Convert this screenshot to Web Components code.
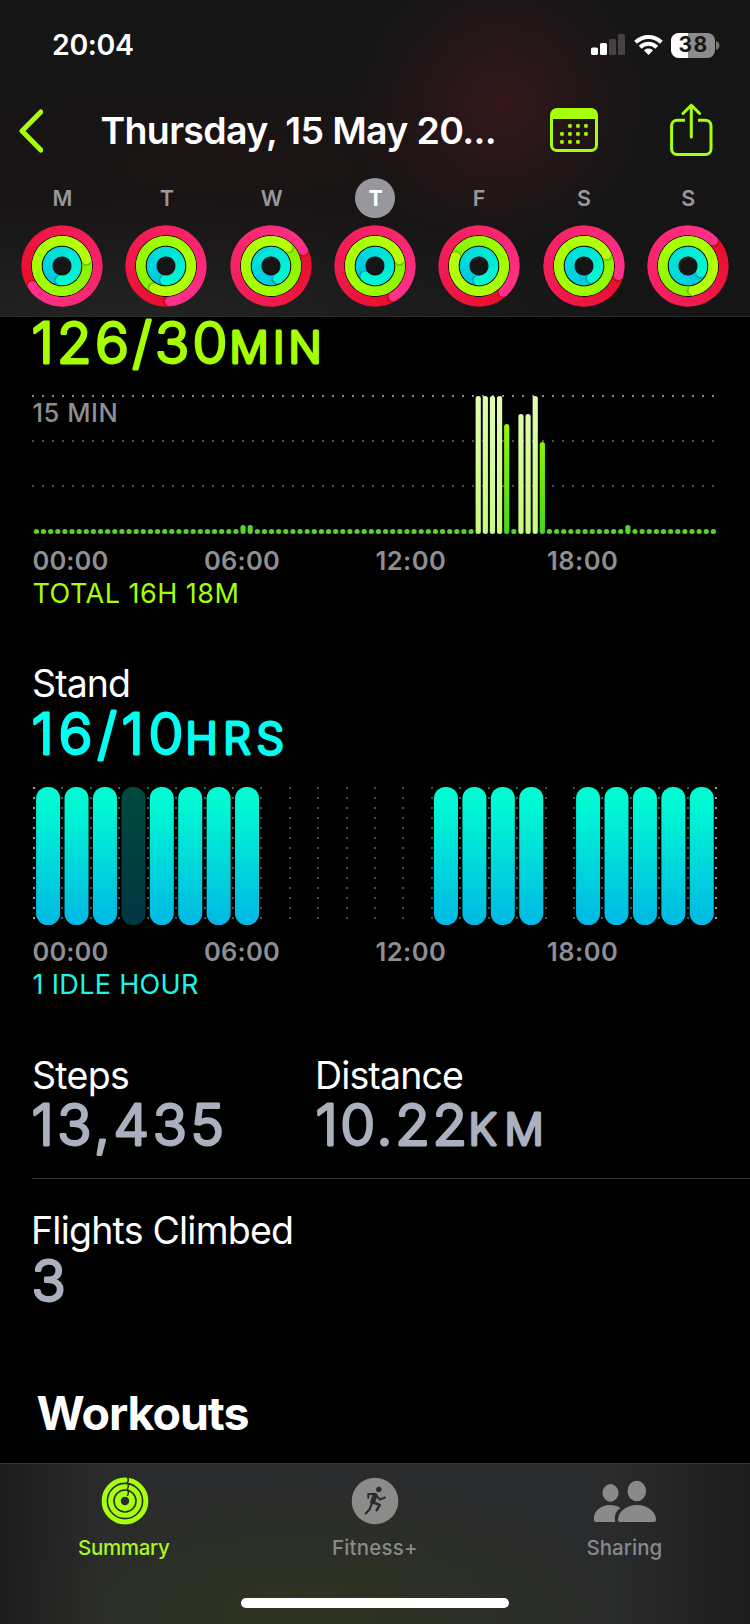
<!DOCTYPE html>
<html lang="en">
<head>
<meta charset="utf-8">
<title>Activity Summary</title>
<style>
  html, body { margin: 0; padding: 0; background: #000; }
  body { width: 750px; height: 1624px; overflow: hidden; font-family: Inter, "Liberation Sans", sans-serif; color: #fff; }
</style>
</head>
<body>
<activity-app></activity-app>
<script>
const FAMILY = 'Inter, "Liberation Sans", sans-serif';
const measurer = document.createElement('canvas').getContext('2d');

class Base extends HTMLElement {
  connectedCallback() {
    if (this.shadowRoot) return;
    this.attachShadow({ mode: 'open' }).innerHTML = this.render();
  }
  num(name, fallback) { return this.hasAttribute(name) ? +this.getAttribute(name) : fallback; }
}

/* A line of text tracked so that its ink fills the width `w`. `round` gives soft stroke ends. */
customElements.define('ink-text', class extends Base {
  render() {
    const text = this.getAttribute('text');
    const size = this.num('size', 24), weight = this.num('weight', 400), w = this.num('w', 100), h = this.num('h', 26);
    const round = this.num('round', 0);
    measurer.font = `${weight} ${size}px ${FAMILY}`;
    const m = measurer.measureText(text);
    const ink = m.actualBoundingBoxRight + m.actualBoundingBoxLeft + round;
    const gaps = text.length - 1;
    const ls = gaps ? (w - ink) / gaps : 0;
    const shift = m.actualBoundingBoxLeft + round / 2;
    const host = `:host{display:block;flex:none;width:${w}px;height:${h}px;font-family:${FAMILY};font-weight:${weight};font-size:${size}px}`;
    if (round) {
      return `<style>${host} svg{display:block;overflow:visible}
        text{fill:currentColor;stroke:currentColor;stroke-width:${round}px;stroke-linejoin:round;stroke-linecap:round;letter-spacing:${ls}px}</style>
        <svg width="${w}" height="${h}"><text x="${shift}" y="${h / 2 + 21.7 - round / 2}">${text}</text></svg>`;
    }
    return `<style>${host} span{display:block;white-space:pre;line-height:${h}px;letter-spacing:${ls}px;margin-left:${shift}px;width:max-content}</style><span>${text}</span>`;
  }
});

customElements.define('status-bar', class extends Base {
  render() {
    return `<style>
      :host{display:flex;height:90px;box-sizing:border-box;padding:0 31px 0 53px;align-items:center}
      ink-text{margin-right:458px}
      svg{display:block;flex:none}
      .sig{margin-right:9px}.wifi{margin-right:8px}
      .bat{display:flex;align-items:center;gap:1px}
      .cell{width:44px;height:25px;border-radius:7.5px;background:linear-gradient(90deg,#fff 38%,#8c8c8c 38%);display:flex;justify-content:center;align-items:center;color:#161616}
      .cell ink-text{margin:0}
      </style>
      <ink-text text="20:04" size="28.5" weight="600" w="80" h="30"></ink-text>
      <svg class="sig" width="34" height="22" viewBox="0 0 34 22"><g fill="#fff"><rect y="13.5" width="7" height="7.5" rx="1.6"/><rect x="9" y="9" width="7" height="12" rx="1.6"/></g><g fill="#454244"><rect x="18" y="5" width="7" height="16" rx="1.6"/><rect x="27" y="0" width="7" height="21" rx="1.6"/></g></svg>
      <svg class="wifi" width="29" height="22" viewBox="0 0 29 22" fill="none" stroke="#fff" stroke-width="4"><path d="M1.6 8.2C9 1.2 20 1.2 27.4 8.2"/><path d="M6.2 13.2C11 8.6 18 8.6 22.8 13.2"/><path d="M14.5 21L10 16.4C12.6 14 16.4 14 19 16.4Z" fill="#fff" stroke="none"/></svg>
      <div class="bat"><div class="cell"><ink-text text="38" size="21" weight="700" w="27" h="24"></ink-text></div>
      <svg width="4" height="9" viewBox="0 0 4 9"><path d="M0 0C4.600 1.500 4.600 7.500 0 9Z" fill="#767676"/></svg></div>`;
  }
});

customElements.define('nav-bar', class extends Base {
  render() {
    return `<style>
      :host{display:flex;height:80px;align-items:center;padding-left:17px;color:#fff}
      svg{display:block;flex:none}
      ink-text{margin:2px 0 0 58.500px}
      .back{margin-top:2px}
      .cal{margin:0 72px 0 55.500px}
      </style>
      <svg class="back" width="26" height="44" viewBox="0 0 26 44"><path d="M23.800 3L5 22L23.800 41" fill="none" stroke="#a8ff0c" stroke-width="5" stroke-linecap="round" stroke-linejoin="round"/></svg>
      <ink-text text="Thursday, 15 May 20..." size="37.500" weight="600" w="393" h="44"></ink-text>
      <svg class="cal" width="48" height="44" viewBox="0 0 48 44"><rect x="1.500" y="1.500" width="45" height="41" rx="5.500" fill="none" stroke="#a8ff0c" stroke-width="3"/><path d="M1.500 11V7a5.500 5.500 0 0 1 5.500-5.500h34a5.500 5.500 0 0 1 5.500 5.500v4z" fill="#a8ff0c"/><g fill="#a8ff0c">
        ${[[18,16],[26,16],[34,16],[10,24],[18,24],[26,24],[34,24],[10,32],[18,32],[26,32]].map(([x,y])=>`<rect x="${x+.2}" y="${y+.2}" width="3.500" height="3.500"/>`).join('')}</g></svg>
      <svg class="share" width="43" height="54" viewBox="0 0 43 54" fill="none" stroke="#a8ff0c" stroke-width="3" stroke-linecap="round" stroke-linejoin="round"><path d="M15 17.200H7.200a5.600 5.600 0 0 0-5.600 5.600V46a5.600 5.600 0 0 0 5.600 5.600H35.400A5.600 5.600 0 0 0 41 46V22.800a5.600 5.600 0 0 0-5.600-5.600H28" stroke-linecap="butt"/><path d="M21.300 34V2.600M13 10.500L21.300 2.200L29.600 10.500"/></svg>`;
  }
});

/* Three full circles whose leading ends sit at the given clockwise angles. */
customElements.define('activity-rings', class extends Base {
  render() {
    const ends = this.getAttribute('ends').split(',').map(Number);
    const specs = [
      [35.7, [232,14,42], [242,28,84], [255,48,138]],
      [25.2, [134,242,0], [160,255,0], [182,255,8]],
      [14.4, [0,196,228], [0,222,218], [0,248,208]]];
    const mix = (a, b, t) => a.map((v, i) => Math.round(v + (b[i] - v) * t));
    const at = (r, deg) => { const a = deg * Math.PI / 180; return [(Math.sin(a) * r).toFixed(2), (-Math.cos(a) * r).toFixed(2)]; };
    let out = '<circle r="35" fill="#0a0f0a"/><circle r="10.500" fill="#161516"/>';
    specs.forEach(([r, tail, mid, head], k) => {
      const n = 60, end = ends[k];
      for (let i = 0; i < n; i++) {
        const t = i / (n - 1);
        const c = t < .4 ? mix(tail, mid, t / .4) : mix(mid, head, (t - .4) / .6);
        const a0 = end - 360 + i * 6 - (i ? 5 : 0), a1 = end - 360 + (i + 1) * 6;
        out += `<path d="M${at(r, a0)}A${r} ${r} 0 0 1 ${at(r, a1)}" fill="none" stroke="rgb(${c})" stroke-width="9.500"/>`;
      }
      const s = at(r, end + 110 / r), e = at(r, end);
      out += `<circle cx="${s[0]}" cy="${s[1]}" r="4.700" fill="#000" opacity=".2"/><circle cx="${e[0]}" cy="${e[1]}" r="4.750" fill="rgb(${head})"/>`;
    });
    return `<style>:host{display:block;width:84px;height:84px}svg{display:block}</style><svg width="84" height="84" viewBox="-42 -42 84 84">${out}</svg>`;
  }
});

customElements.define('week-day', class extends Base {
  render() {
    const sel = this.hasAttribute('selected');
    const d = this.getAttribute('day');
    const w = { M: 17, T: 13, W: 20, F: 11, S: 13 }[d];
    return `<style>:host{display:flex;flex-direction:column;align-items:center;gap:6px}
      .d{width:40px;height:40px;border-radius:50%;display:flex;justify-content:center;align-items:center;color:${sel ? '#fff' : '#98979c'};background:${sel ? '#98979e' : 'none'}}</style>
      <div class="d"><ink-text text="${d}" size="21.500" weight="${sel ? 700 : 600}" w="${w}" h="24"></ink-text></div>
      <activity-rings ends="${this.getAttribute('ends')}"></activity-rings>`;
  }
});

customElements.define('app-header', class extends Base {
  render() {
    const days = [['M','236,75,186'],['T','174,208,184'],['W','64,42,152'],['T','149,75,223'],['F','137,291,183'],['S','105,63,148'],['S','45,168,116']];
    return `<style>
      :host{display:flex;flex-direction:column;position:relative;z-index:1;height:317px;box-sizing:border-box;border-bottom:1px solid #2b2b2b;
        background:radial-gradient(ellipse 150px 150px at 502px 102px,rgba(64,24,28,.72),rgba(64,24,28,.3) 50%,transparent),
        radial-gradient(ellipse 420px 110px at 240px 165px,rgba(44,18,16,.3),transparent),
        radial-gradient(ellipse 520px 130px at 120px 330px,rgba(46,46,46,.6),transparent),#151516}
      .week{display:grid;grid-template-columns:repeat(7,104.300px);padding:8px 0 0 9.900px}
      </style>
      <status-bar></status-bar><nav-bar></nav-bar>
      <div class="week">${days.map(([d, e], i) => `<week-day day="${d}" ends="${e}" ${i === 3 ? 'selected' : ''}></week-day>`).join('')}</div>`;
  }
});

customElements.define('time-axis', class extends Base {
  render() {
    return `<style>:host{display:grid;grid-template-columns:171.500px 171.500px 171.500px auto;height:26px;color:#8e8e93}</style>
      ${[['00:00',74],['06:00',74],['12:00',68.5],['18:00',69]].map(([t, w]) => `<ink-text text="${t}" size="25.500" weight="600" w="${w}" h="26"></ink-text>`).join('')}`;
  }
});

customElements.define('exercise-chart', class extends Base {
  render() {
    const tall = { 29: 9, 30: 9, 62: 138, 63: 138, 64: 138, 65: 138, 66: 110, 68: 120, 69: 120, 70: 138, 71: 92, 83: 9 };
    const pale = [62, 63, 64, 65, 68, 69, 70];
    let s = '';
    [0, 45, 90].forEach((y, k) => { for (let i = 0; i < 69; i++) s += `<rect x="${32 + i * 10}" y="${y}" width="2" height="2" fill="${k ? '#505050' : '#8c8c8c'}"/>`; });
    for (let i = 0; i < 96; i++) {
      const h = tall[i] || 5, x = 36.4 + i * 7.126 - 2.6;
      const fill = pale.includes(i) ? 'url(#p)' : tall[i] > 20 ? 'url(#g)' : '#55d42a';
      s += `<rect x="${x.toFixed(2)}" y="${139 - h}" width="5.200" height="${h}" rx="2.500" fill="${fill}"/>`;
    }
    return `<style>:host{display:grid;height:140px}svg,.t{grid-area:1/1}.t{padding:6px 0 0 33.500px;color:#8e8e93}svg{display:block}</style>
      <svg width="750" height="140"><defs>
      <linearGradient id="p" x1="0" y1="0" x2="0" y2="139" gradientUnits="userSpaceOnUse"><stop stop-color="#e2fcb4"/><stop offset="1" stop-color="#c5fc7c"/></linearGradient>
      <linearGradient id="g" x1="0" y1="0" x2="0" y2="139" gradientUnits="userSpaceOnUse"><stop stop-color="#adff00"/><stop offset="1" stop-color="#41d81a"/></linearGradient></defs>${s}</svg>
      <div class="t"><ink-text text="15 MIN" size="25.500" weight="500" w="83" h="24"></ink-text></div>`;
  }
});

customElements.define('stand-chart', class extends Base {
  render() {
    let s = '';
    const on = i => i < 8 || (i > 13 && i < 18) || i > 18;
    for (let i = 0; i < 25; i++) {
      const x = Math.round(33 + i * 28.42);
      const c = i === 0 || i === 24 ? '#a0a0a0' : (on(i) && on(i - 1) ? '#2c6460' : '#4a4c4c');
      for (let j = 0; j < 14; j++) s += `<rect x="${x}" y="${j * 10}" width="2" height="2" fill="${c}"/>`;
    }
    for (let i = 0; i < 24; i++) if (on(i)) s += `<rect x="${(36.1 + i * 28.42).toFixed(2)}" width="24" height="138" rx="11.500" fill="url(#c)" opacity="${i === 3 ? .29 : 1}"/>`;
    return `<style>:host{display:block}svg{display:block}</style><svg width="750" height="138"><defs><linearGradient id="c" x1="0" y1="0" x2="0" y2="138" gradientUnits="userSpaceOnUse"><stop stop-color="#00fcd4"/><stop offset=".1" stop-color="#00fad3"/><stop offset=".9" stop-color="#00bfe2"/><stop offset="1" stop-color="#00b8e6"/></linearGradient></defs>${s}</svg>`;
  }
});

/* A large rounded figure with an optional small-cap unit on the same baseline. */
customElements.define('metric-value', class extends Base {
  render() {
    const unit = this.getAttribute('unit');
    return `<style>:host{display:flex;gap:${this.num('gap', 6)}px;height:52px}:host>*{margin:0}ink-text:first-of-type{margin-left:-1px}</style>
      <ink-text text="${this.getAttribute('value')}" size="56.500" weight="300" round="2.800" w="${this.num('w')}" h="52"></ink-text>
      ${unit ? `<ink-text text="${unit}" size="43.500" weight="300" round="3" w="${this.num('uw')}" h="52"></ink-text>` : ''}`;
  }
});

customElements.define('metric-block', class extends Base {
  render() {
    return `<style>:host{display:flex;flex-direction:column;gap:${this.num('gap', 5)}px;color:#fff}.v{color:#abb0be}</style>
      <ink-text text="${this.getAttribute('label')}" size="37.500" weight="400" w="${this.num('lw')}" h="39"></ink-text><div class="v"><slot></slot></div>`;
  }
});

customElements.define('tab-item', class extends Base {
  render() {
    return `<style>:host{display:flex;flex-direction:column;align-items:center;color:${this.hasAttribute('active') ? '#a8f522' : '#88898a'}}
      .i{height:74px;display:flex;align-items:center;justify-content:center}ink-text{margin-top:-3px}</style>
      <div class="i"><slot></slot></div><ink-text text="${this.getAttribute('label')}" size="20.500" weight="500" w="${this.num('w')}" h="25"></ink-text>`;
  }
});

customElements.define('tab-bar', class extends Base {
  render() {
    return `<style>
      :host{display:flex;flex-direction:column;align-items:center;height:161px;box-sizing:border-box;border-top:1px solid #363636;
       background:linear-gradient(90deg,rgba(28,27,28,.9),transparent 14%,transparent 82%,rgba(27,27,28,.9)),
       radial-gradient(ellipse 330px 130px at 300px 150px,rgba(48,56,24,.65),transparent),#2a2b2c}
      .tabs{display:grid;grid-template-columns:250px 250px 250px;height:134px;margin-left:-1px}
      .home{width:268px;height:10px;border-radius:5px;background:#fff}
      svg{display:block;overflow:visible}
      </style>
      <div class="tabs">
      <tab-item label="Summary" w="91" active><svg width="48" height="48" viewBox="-24 -24 48 48"><g fill="none" stroke="#a8ff0c"><circle r="20.900" stroke-width="5"/><circle r="14.300" stroke-width="5"/><circle r="7.200" stroke-width="6"/></g><path d="M2.300-24q2.200 2.900 0 5.800q2.200 2.900 0 6.200q2.200 2.900 0 7" fill="none" stroke="#293026" stroke-width="1.500"/></svg></tab-item>
      <tab-item label="Fitness+" w="83"><svg width="48" height="48" viewBox="-24 -24 48 48"><circle r="23.300" fill="#8b8b8a"/><g fill="none" stroke="#2b2c2b" stroke-linecap="round" stroke-linejoin="round"><circle cx="3.800" cy="-11.600" r="2.700" fill="#2b2c2b" stroke="none"/><path d="M-6.700-3.300V-7L-1-7.100" stroke-width="2"/><path d="M0-5.600L-2.400 1" stroke-width="5"/><path d="M1.500-5.300L5-1.500L10-3.500" stroke-width="2"/><path d="M-1.500 1.500L4.800 4L1.700 9.200" stroke-width="2.500"/><path d="M-3.700 4L-5.300 8.200L-9.300 12.500" stroke-width="2.300"/></g></svg></tab-item>
      <tab-item label="Sharing" w="74"><svg width="64" height="48" viewBox="0 0 64 48" fill="#8a8a8b"><ellipse cx="17.500" cy="15.900" rx="8" ry="8.800"/><ellipse cx="43.800" cy="14" rx="9.300" ry="10.300"/><path d="M1 43C0 35 7 28 17 28Q23 28 27.500 31C22.500 34 21 39 22.200 45H3Q1 45 1 43Z"/><path d="M25 43C25 35 33 28 44 28S63 35 63 43Q63 45 61 45H27Q25 45 25 43Z"/></svg></tab-item>
      </div><div class="home"></div>`;
  }
});

customElements.define('activity-app', class extends Base {
  render() {
    return `<style>
      :host{display:flex;flex-direction:column;width:750px;height:1624px;background:#000;overflow:hidden;font-family:${FAMILY}}
      main{display:flex;flex-direction:column}
      .in{margin-left:34px}
      .green{color:#a6ff00}
      exercise-chart{margin-top:26px}
      time-axis.in,.note.in{margin-left:33.500px}
      .ax1{margin-top:13px}.note{margin-top:6px}
      .stand{margin-top:57px}.stand metric-value{color:#00fff0}
      stand-chart{margin-top:27px}.ax2{margin-top:14px}
      .pair{display:grid;grid-template-columns:284px auto;margin-top:58px}
      hr{width:718px;height:1px;border:0;margin:27px 0 0 32px;background:#363638}
      .fl{margin-top:32px}.wk{margin:81px 0 0 37.500px}
      tab-bar{margin-top:auto}
      </style>
      <app-header></app-header>
      <main>
        <metric-value class="in green" value="126/30" w="193" unit="MIN" uw="87"></metric-value>
        <exercise-chart></exercise-chart>
        <time-axis class="in ax1"></time-axis>
        <ink-text class="in note green" text="TOTAL 16H 18M" size="27" weight="400" w="204" h="27"></ink-text>
        <metric-block class="in stand" label="Stand" lw="95"><metric-value value="16/10" w="149" unit="HRS" uw="95"></metric-value></metric-block>
        <stand-chart></stand-chart>
        <time-axis class="in ax2"></time-axis>
        <ink-text class="in note" style="color:#1ef5e4" text="1 IDLE HOUR" size="27" weight="400" w="164.500" h="27"></ink-text>
        <div class="in pair">
          <metric-block gap="4" label="Steps" lw="94"><metric-value value="13,435" w="189"></metric-value></metric-block>
          <metric-block gap="4" label="Distance" lw="145"><metric-value value="10.22" w="148" unit="KM" uw="70"></metric-value></metric-block>
        </div>
        <hr>
        <metric-block class="in fl" label="Flights Climbed" lw="258"><metric-value value="3" w="32"></metric-value></metric-block>
        <ink-text class="wk" text="Workouts" size="46.500" weight="700" w="211" h="51"></ink-text>
      </main>
      <tab-bar></tab-bar>`;
  }
});
</script>
</body>
</html>
